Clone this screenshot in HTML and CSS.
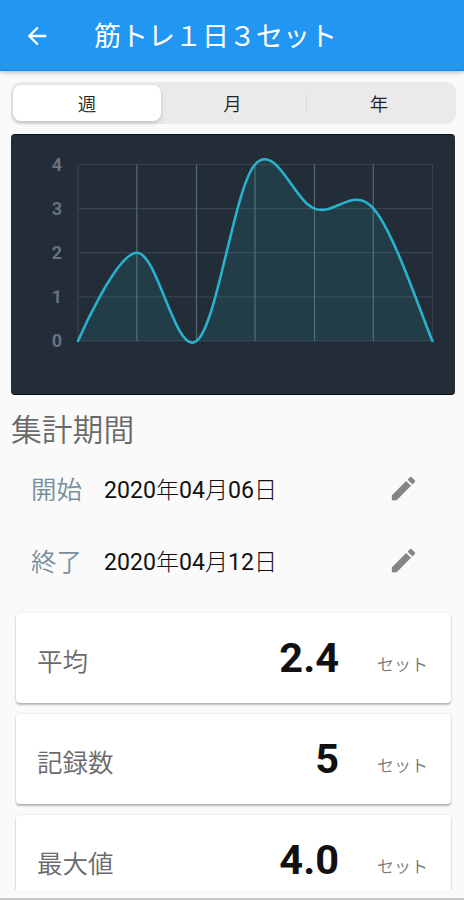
FILE: index.html
```
<!DOCTYPE html>
<html lang="ja">
<head>
<meta charset="utf-8">
<title>筋トレ１日３セット</title>
<link rel="stylesheet" href="styles.css">
</head>
<body>
<div class="app">
  <header class="appbar">
    <svg class="back" viewBox="0 0 24 24"><path d="M20 11H7.83l5.59-5.59L12 4l-8 8 8 8 1.41-1.41L7.83 13H20v-2z"/></svg>
    <h1 class="title">筋トレ１日３セット</h1>
  </header>
  <nav class="segments">
    <span class="segment selected">週</span>
    <span class="segment">月</span>
    <span class="segment divided">年</span>
  </nav>
  <section class="chart">
    <svg width="444" height="261" viewBox="11 134 444 261">
      <g class="grid">
        <path d="M78 164.5H432.5M78 208.6H432.5M78 252.7H432.5M78 296.8H432.5M78 341H432.5M78 164.5V341M432.5 164.5V341"/>
        <path class="days" d="M136.8 164.5V341M196.5 164.5V341M255 164.5V341M314.5 164.5V341M373.3 164.5V341"/>
      </g>
      <path class="area" d="M78 341C78 341 116.2 252.7 137 252.7C157.700 252.700 175.850 356.400 196.500 341C217.150 325.600 234.350 187.700 255 164.500C275.650 141.300 293.800 200.900 314.500 208.600C335.200 216.300 352.850 185.400 373.500 208.600C394.150 231.800 422.200 317.800 432.500 341Z"/>
      <path class="line" d="M78 341C78 341 116.2 252.7 137 252.7C157.700 252.700 175.850 356.400 196.500 341C217.150 325.600 234.350 187.700 255 164.500C275.650 141.300 293.800 200.900 314.500 208.600C335.200 216.300 352.850 185.400 373.500 208.600C394.150 231.800 422.200 317.800 432.500 341"/>
      <g class="axis">
        <text x="62" y="170.500">4</text>
        <text x="62" y="214.700">3</text>
        <text x="62" y="258.800">2</text>
        <text x="62" y="303">1</text>
        <text x="62" y="347">0</text>
      </g>
    </svg>
  </section>
  <h2 class="heading">集計期間</h2>
  <div class="period">
    <span class="period-label">開始</span>
    <span class="date">2020<i>年</i>04<i>月</i>06<i>日</i></span>
    <svg class="edit" viewBox="0 0 24 24"><path d="M3 17.250V21h3.750L17.810 9.940l-3.750-3.750L3 17.250zM20.710 7.040a1 1 0 0 0 0-1.410l-2.340-2.340a1 1 0 0 0-1.410 0l-1.830 1.830 3.750 3.750 1.830-1.830z"/></svg>
  </div>
  <div class="period">
    <span class="period-label">終了</span>
    <span class="date">2020<i>年</i>04<i>月</i>12<i>日</i></span>
    <svg class="edit" viewBox="0 0 24 24"><path d="M3 17.250V21h3.750L17.810 9.940l-3.750-3.750L3 17.250zM20.710 7.040a1 1 0 0 0 0-1.410l-2.340-2.340a1 1 0 0 0-1.410 0l-1.830 1.830 3.750 3.750 1.830-1.830z"/></svg>
  </div>
  <main class="stats">
    <div class="card"><span class="name">平均</span><span class="value">2.4</span><span class="unit">セット</span></div>
    <div class="card"><span class="name">記録数</span><span class="value">5</span><span class="unit">セット</span></div>
    <div class="card"><span class="name">最大値</span><span class="value">4.0</span><span class="unit">セット</span></div>
  </main>
  <footer class="bottom"></footer>
</div>
</body>
</html>
```
FILE: styles.css
```
* { box-sizing: border-box; }
body {
  margin: 0;
  background: #fafafa;
  font-family: Roboto, "Noto Sans CJK JP", sans-serif;
}
.app {
  width: 464px;
  height: 900px;
  overflow: hidden;
  display: flex;
  flex-direction: column;
}
.app > * { flex-shrink: 0; }
.appbar {
  height: 71px;
  padding: 2px 0 0 23px;
  display: flex;
  align-items: center;
  background: #2196f3;
  border-bottom: 1px solid #1888e2;
  box-shadow: 0 1px 5px rgba(0, 0, 0, .3);
}
.back { width: 28px; height: 28px; fill: #fff; }
.title {
  margin: 2px 0 0 43px;
  font-size: 27px;
  line-height: 36px;
  font-weight: 400;
  color: #fff;
}
.segments {
  margin: 11px 8px 0 11px;
  height: 42px;
  padding: 3px 2px;
  display: grid;
  grid-template-columns: repeat(3, 1fr);
  background: #eaeaea;
  border-radius: 10px;
}
.segment {
  display: flex;
  align-items: center;
  justify-content: center;
  padding-right: 2px;
  font-size: 18.5px;
  font-weight: 350;
  color: #222;
}
.selected {
  padding-right: 0;
  margin-right: -1px;
  background: #fff;
  border-radius: 8px;
  box-shadow: 0 2px 4px rgba(0, 0, 0, .18);
}
.divided {
  margin-left: -1px;
  background: linear-gradient(#dcdcdc, #dcdcdc) left center / 1px 21px no-repeat;
}
.chart {
  margin: 10px 9px 0 11px;
  height: 261px;
  background: #232d37;
  border: solid #0b121a;
  border-width: 1px 0;
  border-radius: 4px;
  overflow: hidden;
}
.chart svg { display: block; margin-top: -1px; }
.grid { fill: none; stroke: #37434d; stroke-width: 1.2; }
.grid .days { stroke: #596770; }
.area { fill: #23b6c6; fill-opacity: .12; }
.line { fill: none; stroke: #28b2ce; stroke-width: 2.6; stroke-linecap: round; }
.axis {
  fill: #67727d;
  font-size: 18px;
  font-weight: 700;
  text-anchor: end;
}
.heading {
  margin: 13px 0 0 11px;
  height: 45px;
  font-size: 30.8px;
  line-height: 46px;
  font-weight: 350;
  color: #6a6a6a;
}
.period {
  height: 72px;
  padding: 0 46px 0 31px;
  display: flex;
  align-items: center;
}
.period-label {
  width: 73px;
  padding-top: 1px;
  font-size: 25.5px;
  line-height: 36px;
  font-weight: 350;
  color: #78909c;
}
.date {
  flex: 1;
  padding-top: 3px;
  font-size: 23.1px;
  line-height: 36px;
  font-weight: 400;
  color: #111;
}
.date i { font-style: normal; font-weight: 300; }
.edit { width: 31px; height: 31px; margin: -2px -1px 0 0; fill: #858585; }
.stats {
  height: 293px;
  padding: 16px 13px 0 16px;
  overflow: hidden;
}
.card {
  height: 90px;
  margin-bottom: 11px;
  padding: 0 23px 0 21px;
  display: flex;
  align-items: center;
  background: #fff;
  border-radius: 4px;
  box-shadow: 0 2px 2px rgba(0, 0, 0, .26), 0 0 2px rgba(0, 0, 0, .15);
}
.name { flex: 1; padding-top: 2px; font-size: 25.5px; font-weight: 350; color: #6a6a6a; }
.value { margin-top: -2px; font-size: 41.5px; font-weight: 700; color: #111; }
.unit {
  width: 89px;
  padding-top: 10px;
  text-align: right;
  font-size: 17px;
  font-weight: 350;
  color: #777;
}
.bottom { margin-top: 8px; height: 2px; background: #c8c8c8; }
```
